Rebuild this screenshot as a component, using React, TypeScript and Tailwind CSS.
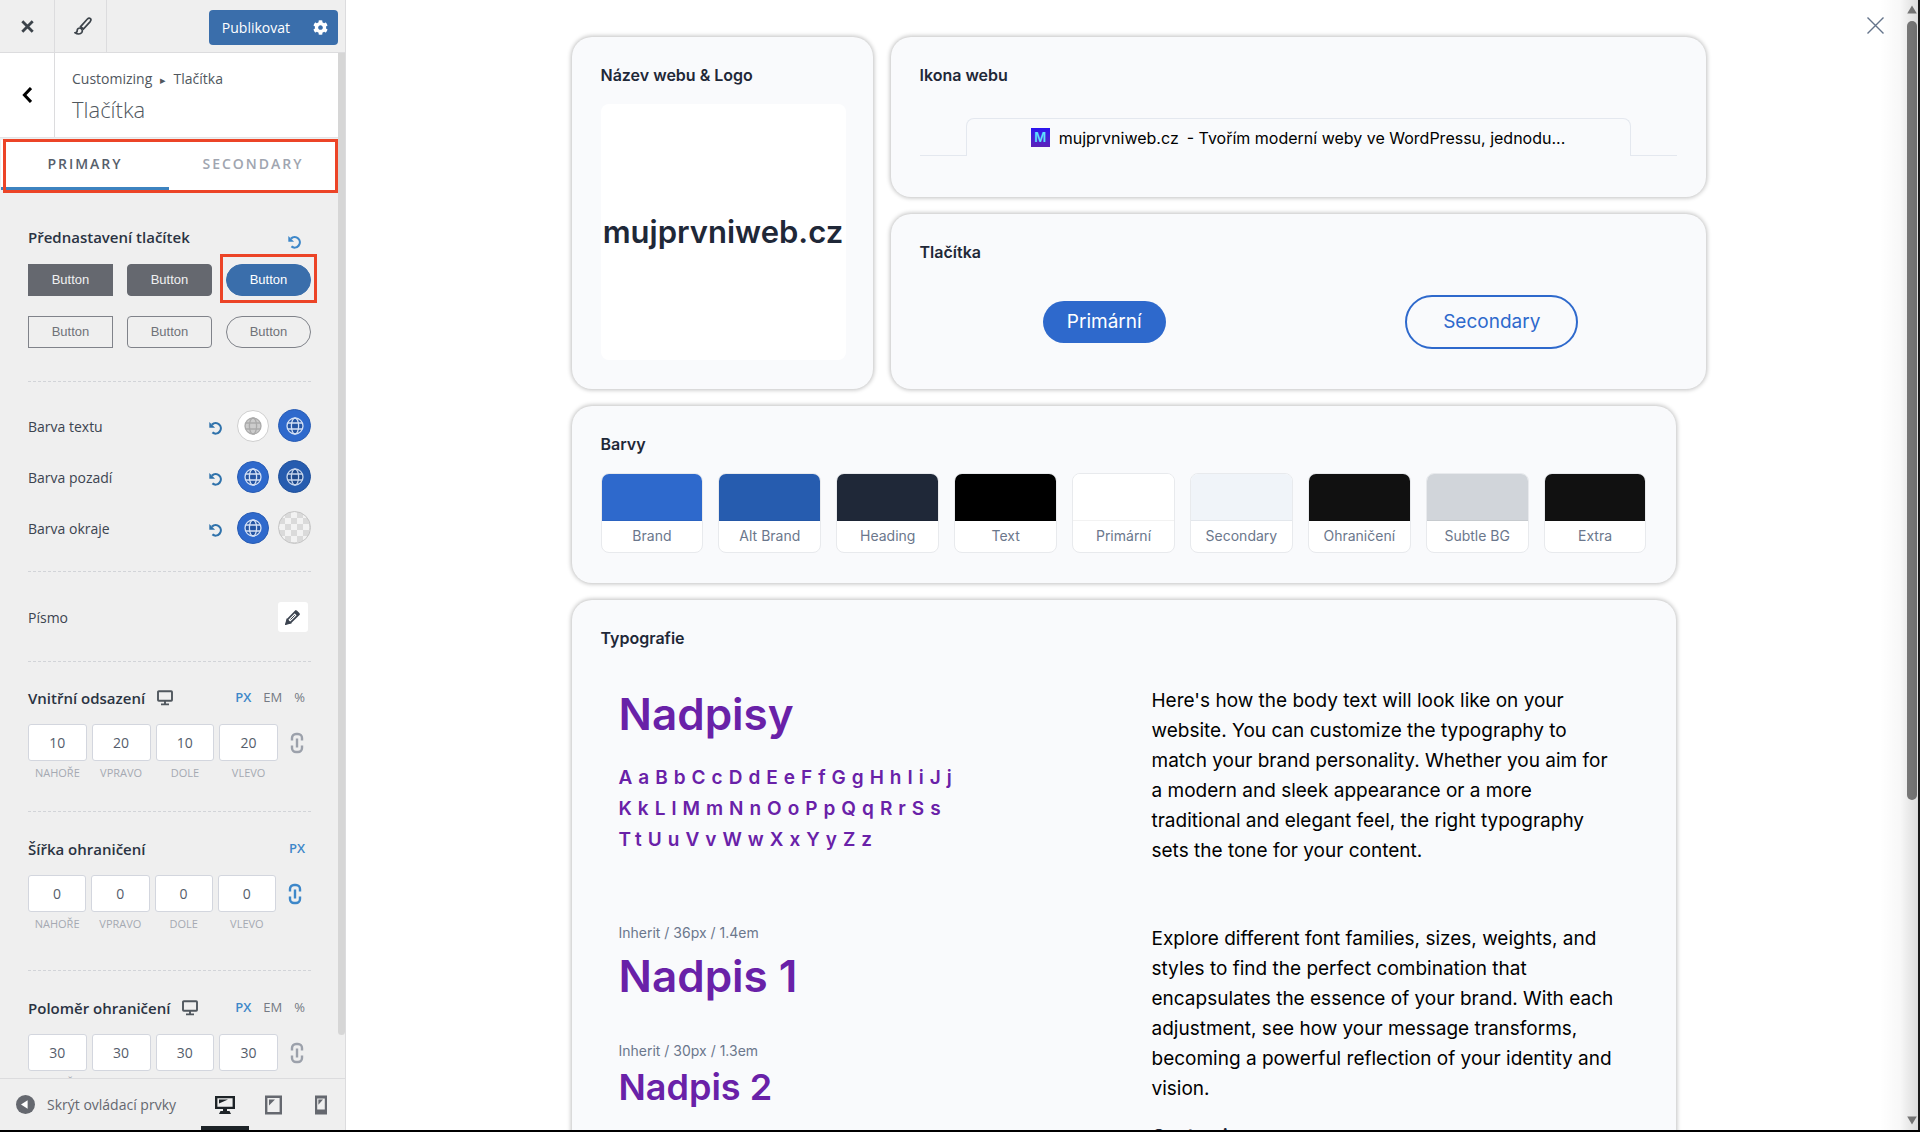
import { useState } from 'react';
import { FaCog } from 'react-icons/fa';

const SWATCHES = [
  { name: 'Brand', color: 'bg-[#2e69cc]' },
  { name: 'Alt Brand', color: 'bg-[#265caf]' },
  { name: 'Heading', color: 'bg-[#1f2838]' },
  { name: 'Text', color: 'bg-black' },
  { name: 'Primární', color: 'bg-white' },
  { name: 'Secondary', color: 'bg-[#f0f4f9]' },
  { name: 'Ohraničení', color: 'bg-[#111111]' },
  { name: 'Subtle BG', color: 'bg-[#d1d5da]' },
  { name: 'Extra', color: 'bg-[#111111]' },
];

const SIDES = ['NAHOŘE', 'VPRAVO', 'DOLE', 'VLEVO'];

const PRESETS = [
  { id: 'filled-square', look: 'border-[#65686f] bg-[#65686f] text-[#f0f0f1]' },
  { id: 'filled-rounded', look: 'rounded border-[#65686f] bg-[#65686f] text-[#f0f0f1]' },
  { id: 'filled-pill', look: 'rounded-full border-[#3a6eab] bg-[#3a6eab] text-white' },
  { id: 'outline-square', look: 'border-[#80838a] text-[#6f7279]' },
  { id: 'outline-rounded', look: 'rounded border-[#80838a] text-[#6f7279]' },
  { id: 'outline-pill', look: 'rounded-full border-[#80838a] text-[#6f7279]' },
];

function UndoIcon() {
  return (
    <svg width="14" height="14" viewBox="0 0 14 14" fill="none">
      <path d="M3 3.6A5.2 5.2 0 1 1 3.4 11.4" stroke="currentColor" strokeWidth="2.2" />
      <path d="M0.3 1V6.8H6.1Z" fill="currentColor" />
    </svg>
  );
}

function GlobeIcon() {
  return (
    <svg width="18" height="18" viewBox="0 0 18 18" fill="none" stroke="currentColor" strokeWidth="1.3">
      <circle cx="9" cy="9" r="8" className="fill-black/20" />
      <ellipse cx="9" cy="9" rx="3.6" ry="8" />
      <path d="M1.8 6H16.2M1.8 12H16.2" />
    </svg>
  );
}

function MonitorIcon() {
  return (
    <svg width="16" height="16" viewBox="0 0 16 16" fill="none" stroke="#50575e" strokeWidth="1.9">
      <rect x="1" y="1.2" width="14" height="9.6" rx="0.8" />
      <path d="M8 11V14M4 14.4H12" />
    </svg>
  );
}

function LinkIcon() {
  return (
    <svg width="14" height="22" viewBox="0 0 14 22" fill="none" stroke="currentColor" strokeWidth="2.4">
      <path d="M2 8.5V6A4 4 0 0 1 6 2H8A4 4 0 0 1 12 6V8.5" />
      <path d="M2 13.5V16A4 4 0 0 0 6 20H8A4 4 0 0 0 12 16V13.5" />
      <path d="M7 6.5V15.5" />
    </svg>
  );
}

function ColorRow({ label, first, second, empty }: { label: string; first: string; second: string; empty?: boolean }) {
  return (
    <div className="flex h-[33px] items-center">
      <span className="flex-1 pt-[2px] text-sm text-[#3c4450]">{label}</span>
      <button aria-label={`Obnovit: ${label}`} className="mr-[14px] pt-1 text-[#2f72ab]">
        <UndoIcon />
      </button>
      <button aria-label={`${label} 1`} className={`mr-[9px] flex size-8 items-center justify-center rounded-full border ${first}`}>
        <GlobeIcon />
      </button>
      <button aria-label={`${label} 2`} className={`flex size-[33px] items-center justify-center rounded-full border ${second}`}>
        {!empty && <GlobeIcon />}
      </button>
    </div>
  );
}

function SpacingControl({ id, title, units, value, responsive, linked }: {
  id: string;
  title: string;
  units: string[];
  value: number[];
  responsive?: boolean;
  linked?: boolean;
}) {
  return (
    <div>
      <div className="flex h-5 items-center">
        <span className="text-[15px] font-semibold text-[#2a3342]">{title}</span>
        {responsive && <span className="ml-3"><MonitorIcon /></span>}
        <div className="ml-auto flex gap-3 pr-[6px] text-[13px]">
          {units.map((unit, i) => (
            <button key={unit} className={i === 0 ? 'font-semibold text-[#3d87c9]' : 'text-[#757a83]'}>
              {unit}
            </button>
          ))}
        </div>
      </div>
      <div className="mt-4 flex">
        <div className="flex flex-1 gap-[5px]">
          {SIDES.map((side, i) => (
            <div key={side} className="flex flex-1 flex-col items-center">
              <input
                id={`${id}-${i}`}
                defaultValue={value[i]}
                className="h-[37px] w-full rounded-[3px] border border-[#d3d6de] bg-white text-center text-sm text-[#555d6b]"
              />
              <label htmlFor={`${id}-${i}`} className="mt-1 text-[11px] leading-4 text-[#a5a9b2]">{side}</label>
            </div>
          ))}
        </div>
        <button
          aria-label="Propojit hodnoty"
          className={linked ? 'ml-3 mr-[9px] h-[37px] text-[#3d87c9]' : 'ml-3 mr-[7px] h-[37px] text-[#9ca1ab]'}
        >
          <LinkIcon />
        </button>
      </div>
    </div>
  );
}

function Divider() {
  return <hr className="border-t border-dashed border-[#d2d4d8]" />;
}

function Sidebar() {
  const [tab, setTab] = useState('primary');

  return (
    <aside className="flex w-[346px] shrink-0 flex-col border-r border-[#dcdcde] bg-[#efefef] font-['Open_Sans','Noto_Sans',sans-serif]">
      {/* Top bar */}
      <div className="flex h-[53px] shrink-0 border-b border-[#dcdcde]">
        <button aria-label="Zavřít" className="flex w-[55px] items-center justify-center border-r border-[#dcdcde] text-[#3c434a]">
          <svg width="13" height="13" viewBox="0 0 13 13" stroke="currentColor" strokeWidth="2.8">
            <path d="M1.3 1.3L11.7 11.7M11.7 1.3L1.3 11.7" />
          </svg>
        </button>
        <button aria-label="Styl" className="flex w-[52px] items-center justify-center border-r border-[#dcdcde] pl-1 text-[#3c434a]">
          <svg width="18" height="18" viewBox="0 0 18 18" fill="none" stroke="currentColor" strokeWidth="1.7">
            <path d="M6.6 9.6L13.4 2C14.4 1 15.6 0.9 16.4 1.6C17.2 2.4 17.1 3.4 16.2 4.6L9.4 12Z" />
            <path d="M6.4 11C4.4 10.8 3.2 12 3.2 13.4C3.2 14.8 2.2 15.6 1.2 15.8C3.4 17.4 6.4 17.2 7.8 15.4C8.8 14 8.4 12.2 6.4 11Z" />
          </svg>
        </button>
        <div className="ml-auto mr-[7px] mt-[10px] flex h-[35px] rounded bg-[#3a6eab] text-white">
          <button className="pl-[13px] pr-3 text-sm">Publikovat</button>
          <button aria-label="Nastavení publikování" className="flex w-9 items-center justify-center">
            <FaCog size={15} />
          </button>
        </div>
      </div>

      {/* Scrolling controls */}
      <div className="flex min-h-0 flex-1">
        <div className="min-w-0 flex-1 overflow-hidden">
          <div className="flex h-[85px] border-b border-[#e2e4e7] bg-white">
            <button aria-label="Zpět" className="flex w-[55px] items-center justify-center border-r border-[#dcdcde]">
              <svg width="10" height="16" viewBox="0 0 10 16" fill="none" stroke="black" strokeWidth="3">
                <path d="M9 1L2.4 8L9 15" />
              </svg>
            </button>
            <div className="pl-[17px] pt-4 text-[#50575e]">
              <p className="text-sm leading-5">Customizing <span className="px-1 text-[11px]">▸</span> Tlačítka</p>
              <h3 className="mt-[3px] text-[22px] font-light leading-8">Tlačítka</h3>
            </div>
          </div>

          <div className="px-[1px] pt-[2px]">
            <div className="relative grid h-[50px] grid-cols-2 bg-white text-sm font-semibold tracking-[2px]">
              <button
                onClick={() => setTab('primary')}
                className={tab === 'primary' ? 'border-b-3 border-[#3d83c0] text-[#565e6b]' : 'border-b-3 border-transparent text-[#a0a5b0]'}
              >
                PRIMARY
              </button>
              <button
                onClick={() => setTab('secondary')}
                className={tab === 'secondary' ? 'border-b-3 border-[#3d83c0] text-[#565e6b]' : 'border-b-3 border-transparent text-[#a0a5b0]'}
              >
                SECONDARY
              </button>
              <div className="pointer-events-none absolute -bottom-[3px] -right-[1px] -top-[1px] left-[2px] border-3 border-[#ec4427]" />
            </div>
          </div>

          <div className="pl-7 pr-[27px] pt-[35px]">
            <div className="flex h-6 items-center justify-between">
              <span className="text-[15px] font-semibold text-[#2a3342]">Přednastavení tlačítek</span>
              <button aria-label="Obnovit přednastavení" className="mr-[9px] pt-[10px] text-[#3d87c9]">
                <UndoIcon />
              </button>
            </div>
            <div className="mt-[15px] grid grid-cols-3 gap-x-[14px] gap-y-5">
              {PRESETS.map((preset) => (
                <div key={preset.id} className="relative">
                  <button className={`h-8 w-full border font-['Liberation_Sans',sans-serif] text-[13px] ${preset.look}`}>
                    Button
                  </button>
                  {preset.id === 'filled-pill' && (
                    <div className="pointer-events-none absolute -inset-x-[6px] -bottom-[7px] -top-[10px] border-3 border-[#ec4427]" />
                  )}
                </div>
              ))}
            </div>

            <div className="mt-[33px]"><Divider /></div>
            <div className="mt-[27px] flex flex-col gap-[18px]">
              <ColorRow label="Barva textu" first="border-[#cfcfcf] bg-white text-[#aaaaaa]" second="border-[#285cb4] bg-[#2e69cc] text-[#d3e0f5]" />
              <ColorRow label="Barva pozadí" first="border-[#285cb4] bg-[#2e69cc] text-[#d3e0f5]" second="border-[#20509a] bg-[#265caf] text-[#c6d5ec]" />
              <ColorRow label="Barva okraje" first="border-[#285cb4] bg-[#2e69cc] text-[#d3e0f5]" second="border-[#c4c4c4] bg-[conic-gradient(#dadada_25%,#f2f2f2_0_50%,#dadada_0_75%,#f2f2f2_0)] bg-size-[12px_12px]" empty />
            </div>
            <div className="mt-[27px]"><Divider /></div>

            <div className="mt-[30px] flex h-[30px] items-center justify-between">
              <span className="pt-[2px] text-sm text-[#3c4450]">Písmo</span>
              <button aria-label="Upravit písmo" className="mr-[3px] flex size-[30px] items-center justify-center rounded-[3px] bg-white">
                <svg width="16" height="16" viewBox="0 0 16 16" fill="none" stroke="#3c4450" strokeWidth="1.7">
                  <path d="M1.6 14.4L2.6 10.4L10.6 2.2L13.8 5.4L5.6 13.4Z" />
                  <path d="M9 3.8L12.2 7L14.8 4.4L11.6 1.2Z" fill="#3c4450" stroke="none" />
                  <path d="M1 15L2.2 10.8L5.2 13.8Z" fill="#3c4450" />
                  <path d="M5.4 10.6L9.8 6.2" strokeWidth="1" />
                </svg>
              </button>
            </div>
            <div className="mb-[26px] mt-[29px]"><Divider /></div>

            <SpacingControl id="padding" title="Vnitřní odsazení" units={['PX', 'EM', '%']} value={[10, 20, 10, 20]} responsive />
            <div className="mb-[27px] mt-[30px]"><Divider /></div>

            <SpacingControl id="border" title="Šířka ohraničení" units={['PX']} value={[0, 0, 0, 0]} linked />
            <div className="mb-[27px] mt-[38px]"><Divider /></div>

            <SpacingControl id="radius" title="Poloměr ohraničení" units={['PX', 'EM', '%']} value={[30, 30, 30, 30]} responsive />
          </div>
        </div>
        <div className="mb-[43px] w-[7px] rounded-b-full bg-[#d6d6d6]" />
      </div>

      {/* Footer */}
      <div className="flex h-[52px] shrink-0 items-stretch border-t border-[#dcdcde] text-[#65686f]">
        <button className="flex flex-1 items-center gap-3 pl-4 text-sm">
          <svg width="19" height="19" viewBox="0 0 19 19">
            <circle cx="9.5" cy="9.5" r="9.5" fill="#65686f" />
            <path d="M11.6 5.2V13.8L5 9.5Z" fill="white" />
          </svg>
          Skrýt ovládací prvky
        </button>
        <button aria-label="Počítač" className="flex w-12 items-center justify-center border-b-4 border-[#1d2327] pt-1 text-[#1d2327]">
          <svg width="20" height="20" viewBox="0 0 20 20">
            <path fillRule="evenodd" fill="currentColor" d="M0 1H20V14H12V16H14.5L16 19H4L5.5 16H8V14H0ZM2.4 3.2V11.8H17.6V3.2Z" />
            <path d="M4 4.5H13L4 8.4Z" fill="currentColor" />
          </svg>
        </button>
        <button aria-label="Tablet" className="flex w-12 items-center justify-center">
          <svg width="17" height="20" viewBox="0 0 17 20">
            <path fillRule="evenodd" fill="currentColor" d="M0 0.5H17V19.5H0ZM2.4 3V17H14.6V3Z" />
            <path d="M4 4.6H10L4 10.4Z" fill="currentColor" />
          </svg>
        </button>
        <button aria-label="Mobil" className="flex w-12 items-center justify-center">
          <svg width="12" height="20" viewBox="0 0 12 20">
            <path fillRule="evenodd" fill="currentColor" d="M0 0.5H12V19.5H0ZM2.2 3.4V14.6H9.8V3.4Z" />
            <path d="M3.4 4.6H8L3.4 9.8Z" fill="currentColor" />
          </svg>
        </button>
      </div>
    </aside>
  );
}

function Card({ title, className = '', children }: { title: string; className?: string; children: React.ReactNode }) {
  return (
    <section className={`rounded-[20px] bg-[#f9fafc] px-[29px] pt-[26px] shadow-[0_0_4px_1px_rgba(0,0,0,0.25)] ${className}`}>
      <h2 className="text-base font-semibold leading-6 text-[#1f2838]">{title}</h2>
      {children}
    </section>
  );
}

function Preview() {
  return (
    <main className="relative flex min-w-0 flex-1 bg-white font-['Inter',sans-serif]">
      <div className="min-w-0 flex-1 overflow-hidden pr-1 pt-[37px]">
        <div className="mx-auto flex w-full max-w-[1104px] flex-col gap-[17px]">
          {/* The first row runs past the cards below it */}
          <div className="-mr-[30px] grid grid-cols-[301px_1fr] gap-[18px]">
            <Card title="Název webu & Logo" className="pb-[29px]">
              <div className="-mr-[2px] mt-[17px] flex h-64 items-center justify-center rounded-lg bg-white">
                <span className="text-[31px] font-semibold text-[#1f2838]">mujprvniweb.cz</span>
              </div>
            </Card>

            <div className="flex flex-col gap-[17px]">
              <Card title="Ikona webu" className="h-40">
                <div className="mt-[31px] flex h-[38px] items-stretch">
                  <div className="w-[46px] border-b border-[#e4e8ef]" />
                  <div className="flex flex-1 items-center justify-center rounded-t-lg border-x border-t border-[#e4e8ef] text-base text-black">
                    <span className="mr-[9px] flex size-[19px] items-center justify-center bg-linear-to-b from-[#2a12f0] to-[#5c20b8] text-[13px] font-semibold text-[#5ee0ff]">
                      M
                    </span>
                    <span>mujprvniweb.cz</span>
                    <span className="ml-2">- Tvořím moderní weby ve WordPressu, jednodu...</span>
                  </div>
                  <div className="w-[46px] border-b border-[#e4e8ef]" />
                </div>
              </Card>

              <Card title="Tlačítka" className="h-[175px]">
                <div className="mt-[31px] grid h-[54px] grid-cols-2 items-center gap-[18px] text-[19px]">
                  <div className="text-center">
                    <button className="h-[42px] rounded-[21px] bg-[#2e69cc] px-6 text-white">Primární</button>
                  </div>
                  <div className="text-center">
                    <button className="h-[54px] rounded-[27px] border-2 border-[#2e69cc] px-9 text-[#2e69cc]">Secondary</button>
                  </div>
                </div>
              </Card>
            </div>
          </div>

          <Card title="Barvy" className="pb-[30px]">
            <div className="mt-[17px] grid grid-cols-9 gap-[15px]">
              {SWATCHES.map((swatch) => (
                <div key={swatch.name} className="overflow-hidden rounded-lg border border-[#e8eaed] bg-white">
                  <div className={`h-[47px] border-b border-black/5 ${swatch.color}`} />
                  <p className="pb-[6px] pt-[5px] text-center text-sm leading-5 text-[#6b778c]">{swatch.name}</p>
                </div>
              ))}
            </div>
          </Card>

          <Card title="Typografie">
            <div className="grid grid-cols-[533px_1fr] pl-[18px] pr-6 pt-[33px]">
              <div className="font-semibold text-[#6921a8]">
                <h1 className="text-[44px] leading-[62px]">Nadpisy</h1>
                <p className="mt-[17px] text-[19px] leading-[31px] tracking-[6px]">
                  AaBbCcDdEeFfGgHhIiJj
                  <br />
                  KkLlMmNnOoPpQqRrSs
                  <br />
                  TtUuVvWwXxYyZz
                </p>
                <p className="mt-[68px] text-sm font-normal leading-5 text-[#6b778c]">Inherit / 36px / 1.4em</p>
                <h1 className="mt-[2px] text-[44px] leading-[62px]">Nadpis 1</h1>
                <p className="mt-[34px] text-sm font-normal leading-5 text-[#6b778c]">Inherit / 30px / 1.3em</p>
                <h2 className="mt-[2px] text-4xl leading-[48px]">Nadpis 2</h2>
              </div>
              <div className="pt-[3px] text-[19px] leading-[30px] text-black">
                <p>
                  Here's how the body text will look like on your website. You can customize the typography to match
                  your brand personality. Whether you aim for a modern and sleek appearance or a more traditional and
                  elegant feel, the right typography sets the tone for your content.
                </p>
                <p className="mt-[58px]">
                  Explore different font families, sizes, weights, and styles to find the perfect combination that
                  encapsulates the essence of your brand. With each adjustment, see how your message transforms,
                  becoming a powerful reflection of your identity and vision.
                </p>
                <h3 className="mt-[18px] font-semibold text-[#1f2838]">Customize</h3>
              </div>
            </div>
          </Card>
        </div>
      </div>

      <div className="pointer-events-none absolute inset-y-0 right-0 w-10 bg-linear-to-r from-transparent via-black/3 to-black/15" />
      <button aria-label="Zavřít náhled" className="absolute right-9 top-[17px] text-[#64748b]">
        <svg width="17" height="17" viewBox="0 0 17 17" stroke="currentColor" strokeWidth="1.4">
          <path d="M0.5 0.5L16.5 16.5M16.5 0.5L0.5 16.5" />
        </svg>
      </button>

      {/* Page scrollbar */}
      <div className="flex w-[15px] flex-col items-center border-r-2 border-[#1c1c1c] pb-[5px] pt-[5px]">
        <svg width="10" height="9" viewBox="0 0 10 9"><path d="M5 0.5L9.8 8.5H0.2Z" fill="#808080" /></svg>
        <div className="mt-[7px] h-[779px] w-[10px] rounded-full bg-[#808080]" />
        <svg className="mt-auto" width="10" height="9" viewBox="0 0 10 9"><path d="M5 8.5L9.8 0.5H0.2Z" fill="#808080" /></svg>
      </div>
    </main>
  );
}

export default function App() {
  return (
    <div className="flex h-screen overflow-hidden border-b-2 border-black">
      <Sidebar />
      <Preview />
    </div>
  );
}
